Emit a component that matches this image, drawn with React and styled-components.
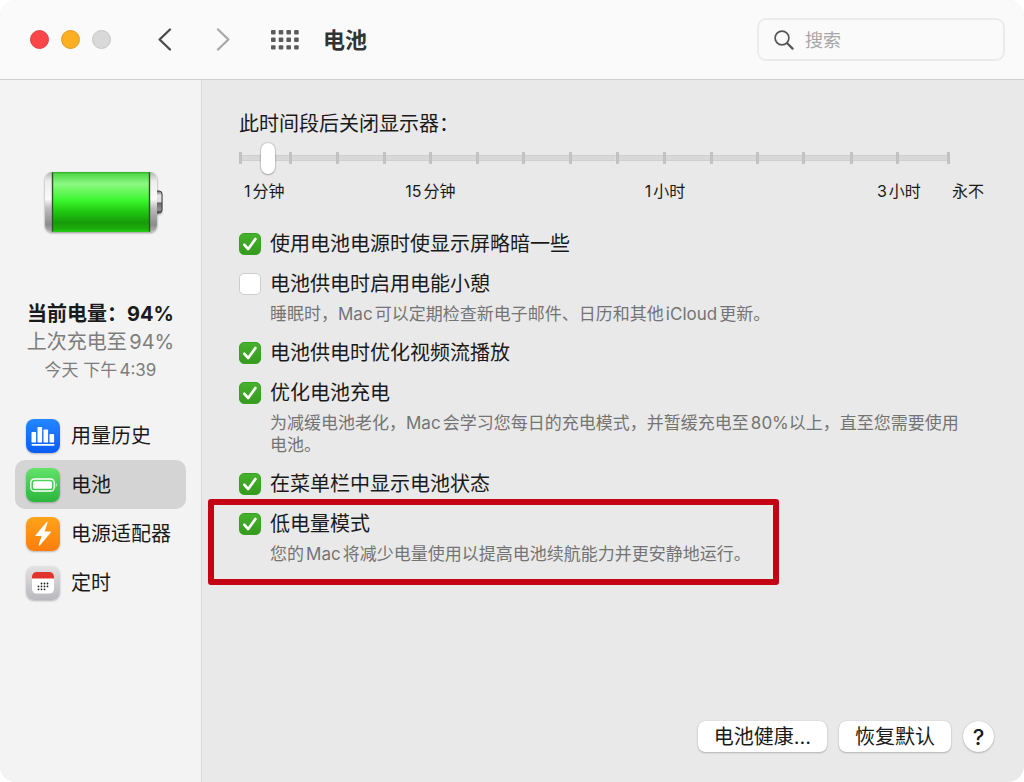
import {useState} from "react";
import styled, {createGlobalStyle} from "styled-components";

const navItems = [
  {id: 'history', label: '用量历史', Icon: HistoryIcon},
  {id: 'battery', label: '电池', Icon: BatteryIcon},
  {id: 'adapter', label: '电源适配器', Icon: AdapterIcon},
  {id: 'schedule', label: '定时', Icon: ScheduleIcon},
]

const options = [
  {id: 'dim', label: '使用电池电源时使显示屏略暗一些', checked: true},
  {
    id: 'nap',
    label: '电池供电时启用电能小憩',
    hint: '睡眠时，Mac可以定期检查新电子邮件、日历和其他iCloud更新。',
    checked: false,
  },
  {id: 'video', label: '电池供电时优化视频流播放', checked: true},
  {
    id: 'charging',
    label: '优化电池充电',
    hint: '为减缓电池老化，Mac会学习您每日的充电模式，并暂缓充电至80%以上，直至您需要使用电池。',
    checked: true,
  },
  {id: 'menubar', label: '在菜单栏中显示电池状态', checked: true},
  {
    id: 'lowpower',
    label: '低电量模式',
    hint: '您的Mac将减少电量使用以提高电池续航能力并更安静地运行。',
    checked: true,
    marked: true,
  },
]

// the first and last steps are a little longer than the rest
const steps = [50, 47, 47, 46, 47, 46, 47, 46, 47, 47, 46, 46, 48, 46, 51]

const App = () => {
  const [activeItem, setActiveItem] = useState('battery')

  return (
    <>
      <GlobalStyle />
      <Window>
        <Toolbar>
          <Lights>
            <Light $color="#fc4548" $edge="#e33e41" aria-label="关闭" />
            <Light $color="#fdaf24" $edge="#e39c1c" aria-label="最小化" />
            <Light $color="#d9d9d9" $edge="#c6c6c6" aria-label="缩放" />
          </Lights>
          <ArrowGroup>
            <IconButton aria-label="后退">
              <svg width="14" height="24" viewBox="0 0 14 24" fill="none" stroke="#4a4a4a" strokeWidth="2.3" strokeLinecap="round" strokeLinejoin="round">
                <path d="M12 1.5 L1.6 11.5 L12 21.5" />
              </svg>
            </IconButton>
            <IconButton aria-label="前进">
              <svg width="14" height="24" viewBox="0 0 14 24" fill="none" stroke="#a9a9a9" strokeWidth="2.3" strokeLinecap="round" strokeLinejoin="round">
                <path d="M2 1.5 L12.4 11.5 L2 21.5" />
              </svg>
            </IconButton>
          </ArrowGroup>
          <IconButton aria-label="显示全部">
            <svg width="28" height="20" viewBox="0 0 28 20" fill="#5b5b5b">
              {[0, 7.6, 15.2].map((y) => [0, 7.7, 15.4, 23.1].map((x) => (
                <rect key={`${x}-${y}`} x={x} y={y} width="4.6" height="4.4" rx="1" />
              )))}
            </svg>
          </IconButton>
          <Title>电池</Title>
          <Search>
            <svg width="20" height="20" viewBox="0 0 20 20" fill="none" stroke="#565656" strokeLinecap="round">
              <circle cx="8" cy="8" r="6.9" strokeWidth="1.7" />
              <path d="M13.2 13.2 L18.6 18.6" strokeWidth="2.2" />
            </svg>
            <SearchInput type="search" placeholder="搜索" aria-label="搜索" />
          </Search>
        </Toolbar>
        <Body>
          <Sidebar>
            <BatteryPicture />
            <Status>
              <Charge>当前电量：94%</Charge>
              <LastCharge>上次充电至94%</LastCharge>
              <ChargeTime>今天 下午4:39</ChargeTime>
            </Status>
            <Nav>
              {navItems.map(({id, label, Icon}) => (
                <NavButton
                  key={id}
                  $active={activeItem === id}
                  onClick={() => setActiveItem(id)}
                >
                  <Icon />
                  {label}
                </NavButton>
              ))}
            </Nav>
          </Sidebar>
          <Main>
            <SliderTitle htmlFor="display-off">此时间段后关闭显示器：</SliderTitle>
            <SliderArea>
              <Track>
                {steps.map((size, i) => <Step key={i} $size={size} />)}
              </Track>
              <Range id="display-off" type="range" min="0" max="1000" defaultValue="32" />
            </SliderArea>
            <SliderLabels>
              <span>1分钟</span>
              <span>15分钟</span>
              <span>1小时</span>
              <span>3小时</span>
              <span>永不</span>
            </SliderLabels>
            <Options>
              {options.map((option) => (
                <Option key={option.id} $marked={option.marked}>
                  <Checkbox id={option.id} type="checkbox" defaultChecked={option.checked} />
                  <label htmlFor={option.id}>{option.label}</label>
                  {option.hint && <Hint>{option.hint}</Hint>}
                </Option>
              ))}
            </Options>
            <Footer>
              <Button>电池健康...</Button>
              <Button>恢复默认</Button>
              <HelpButton aria-label="帮助">?</HelpButton>
            </Footer>
          </Main>
        </Body>
      </Window>
    </>
  );
};

function BatteryPicture() {
  return (
    <BatterySvg width="124" height="72" viewBox="-3 -1 124 72" aria-hidden="true">
      <defs>
        <linearGradient id="metal" x1="0" y1="0" x2="0" y2="1">
          <stop offset="0" stopColor="#b5b5b5" />
          <stop offset="0.15" stopColor="#ededed" />
          <stop offset="0.45" stopColor="#fafafa" />
          <stop offset="0.6" stopColor="#bdbdbd" />
          <stop offset="0.88" stopColor="#8c8c8c" />
          <stop offset="1" stopColor="#b4b4b4" />
        </linearGradient>
        <linearGradient id="charge" x1="0" y1="0" x2="0" y2="1">
          <stop offset="0" stopColor="#2fae27" />
          <stop offset="0.04" stopColor="#55da4c" />
          <stop offset="0.2" stopColor="#8cf982" />
          <stop offset="0.48" stopColor="#3af52c" />
          <stop offset="0.66" stopColor="#20c812" />
          <stop offset="0.84" stopColor="#169b08" />
          <stop offset="0.95" stopColor="#1cae0c" />
          <stop offset="1" stopColor="#25d114" />
        </linearGradient>
        <linearGradient id="tip" x1="0" y1="0" x2="0" y2="1">
          <stop offset="0" stopColor="#6b6b6b" />
          <stop offset="0.2" stopColor="#e6e6e6" />
          <stop offset="0.48" stopColor="#dddddd" />
          <stop offset="0.55" stopColor="#686868" />
          <stop offset="0.85" stopColor="#909090" />
          <stop offset="1" stopColor="#3f3f3f" />
        </linearGradient>
        <filter id="soft" x="-10%" y="-10%" width="120%" height="130%">
          <feDropShadow dx="0" dy="1" stdDeviation="1.2" floodOpacity="0.4" />
        </filter>
      </defs>
      <g filter="url(#soft)">
        <rect x="112" y="23" width="8" height="22" rx="3" fill="url(#tip)" stroke="#444" strokeWidth="1" />
        <rect x="3" y="4" width="112" height="60" rx="7" fill="url(#metal)" />
      </g>
      <rect x="10" y="4" width="98" height="60" fill="url(#charge)" />
      <path d="M10.5 4.5 V63.5 M107.5 4.5 V63.5" stroke="#2b5527" strokeWidth="1.4" />
    </BatterySvg>
  )
}

function HistoryIcon() {
  return (
    <Tile $from="#2386ff" $to="#0b5cf5">
      <svg width="34" height="34" viewBox="0 0 34 34" fill="#fff" aria-hidden="true">
        <rect x="5.5" y="13" width="4.6" height="10.6" rx="0.7" />
        <rect x="11.5" y="8" width="4.6" height="15.6" rx="0.7" />
        <rect x="17.5" y="10.5" width="4.6" height="13.1" rx="0.7" />
        <rect x="23.5" y="15" width="4.6" height="8.6" rx="0.7" />
        <rect x="5.5" y="25" width="23" height="1.7" rx="0.8" />
      </svg>
    </Tile>
  )
}

function BatteryIcon() {
  return (
    <Tile $from="#62e36a" $to="#2cb53d">
      <svg width="34" height="34" viewBox="0 0 34 34" fill="#fff" aria-hidden="true">
        <rect x="4.8" y="11" width="23.4" height="12" rx="3.6" fill="none" stroke="#fff" strokeWidth="1.3" />
        <rect x="7" y="13.2" width="19" height="7.6" rx="1.6" />
        <path d="M29.8 14.6 Q31.6 17 29.8 19.4 Z" />
      </svg>
    </Tile>
  )
}

function AdapterIcon() {
  return (
    <Tile $from="#ffa31a" $to="#fb7d0c">
      <svg width="34" height="34" viewBox="0 0 34 34" fill="#fff" aria-hidden="true">
        <path d="M20.6 5 L9.4 18.2 Q9 19 9.8 19 H15.6 L12.6 28 Q12.8 29.4 13.8 28.4 L24.8 15.4 Q25.2 14.4 24.4 14.4 H18.6 L21.6 5.6 Q21.6 4.4 20.6 5 Z" />
      </svg>
    </Tile>
  )
}

function ScheduleIcon() {
  const dots = [[15.5, 17.5], [18.5, 17.5], [21.5, 17.5], [12.5, 20.4], [15.5, 20.4], [18.5, 20.4], [21.5, 20.4], [12.5, 23.3], [15.5, 23.3], [18.5, 23.3]]
  return (
    <Tile $from="#e2e2e4" $to="#b9b9bd">
      <svg width="34" height="34" viewBox="0 0 34 34" aria-hidden="true">
        <rect x="6" y="6" width="22" height="21.5" rx="4.5" fill="#fff" />
        <path d="M6 12.6 V10.5 A4.5 4.5 0 0 1 10.5 6 H23.5 A4.5 4.5 0 0 1 28 10.5 V12.6 Z" fill="#e0342c" />
        {dots.map(([x, y]) => <circle key={`${x}-${y}`} cx={x} cy={y} r="0.9" fill="#222" />)}
      </svg>
    </Tile>
  )
}

const GlobalStyle = createGlobalStyle`
  * {
    box-sizing: border-box;
  }

  body {
    margin: 0;
    background: white;
    color: #1a1a1a;
    font-family: Inter, "Noto Sans CJK SC", sans-serif;
    font-size: 20px;
    line-height: 28px;
    text-autospace: normal;
  }

  button, input {
    font: inherit;
    color: inherit;
  }
`

const Window = styled.div`
  display: flex;
  flex-direction: column;
  min-height: 100vh;
  border-radius: 16px;
  overflow: hidden;
  background: #e9e9e9;
`

const Toolbar = styled.header`
  display: flex;
  align-items: center;
  height: 80px;
  padding: 0 19px 0 30px;
  background: #fafafa;
  border-bottom: 1px solid #cfcfcf;
`

const Lights = styled.div`
  display: flex;
  gap: 12px;
`

const Light = styled.button`
  width: 19px;
  height: 19px;
  padding: 0;
  border: 1px solid ${({$edge}) => $edge};
  border-radius: 50%;
  background: ${({$color}) => $color};
`

const IconButton = styled.button`
  display: flex;
  padding: 0;
  border: none;
  background: none;
`

const ArrowGroup = styled.div`
  display: flex;
  gap: 44px;
  margin: 0 41px 0 47px;
`

const Title = styled.h1`
  margin: 0 0 0 24px;
  font-size: 22px;
  font-weight: 700;
  color: #333;
`

const Search = styled.div`
  display: flex;
  align-items: center;
  gap: 11px;
  width: 248px;
  height: 43px;
  margin-left: auto;
  padding: 0 15px;
  border: 2px solid #ebebeb;
  border-radius: 9px;
`

const SearchInput = styled.input`
  flex: 1;
  min-width: 0;
  padding: 2px 0 0;
  border: none;
  outline: none;
  background: none;
  font-size: 18px;

  &::placeholder {
    color: #a6a6a6;
  }
`

const Body = styled.div`
  flex: 1;
  display: flex;
`

const Sidebar = styled.aside`
  flex: none;
  width: 202px;
  padding: 87px 15px 0;
  background: #f3f3f3;
  border-right: 1px solid #dadada;
`

const BatterySvg = styled.svg`
  display: block;
  margin: 0 auto;
`

const Status = styled.div`
  margin-top: 61px;
  text-align: center;
  white-space: nowrap;
`

const Charge = styled.div`
  font-weight: 700;
`

const LastCharge = styled.div`
  color: #7d7d7d;
`

const ChargeTime = styled.div`
  font-size: 17px;
  color: #7d7d7d;
`

const Nav = styled.nav`
  display: flex;
  flex-direction: column;
  margin-top: 27px;
`

const NavButton = styled.button`
  display: flex;
  align-items: center;
  gap: 11px;
  height: 49px;
  padding: 0 11px;
  border: none;
  border-radius: 10px;
  background: ${({$active}) => $active ? '#d4d4d4' : 'none'};
  white-space: nowrap;
`

const Tile = styled.span`
  display: flex;
  flex: none;
  border-radius: 8px;
  background: linear-gradient(${({$from}) => $from}, ${({$to}) => $to});
  box-shadow: 0 1px 2px rgba(0, 0, 0, 0.25);
`

const Main = styled.main`
  flex: 1;
  display: flex;
  flex-direction: column;
  min-width: 0;
  padding: 30px 30px 30px 37px;
`

const SliderTitle = styled.label`
  align-self: flex-start;
`

const SliderArea = styled.div`
  display: grid;
  align-items: center;
  height: 32px;
  margin: 4px 44px 0 0;
`

const Track = styled.div`
  grid-area: 1 / 1;
  display: flex;
  align-items: center;
  height: 12px;
  border-right: 3px solid #c2c2c2;
`

const Step = styled.div`
  flex: ${({$size}) => $size} 1 0;
  height: 12px;
  border-left: 3px solid #c2c2c2;
  background: linear-gradient(#cecece, #cecece 1px, #d8d8d8 1px, #d8d8d8 5px, #cecece 5px) center / 100% 6px no-repeat;
`

const Range = styled.input`
  grid-area: 1 / 1;
  width: 100%;
  height: 32px;
  margin: 0;
  appearance: none;
  background: none;

  &::-webkit-slider-thumb {
    appearance: none;
    width: 14px;
    height: 31px;
    border-radius: 7px;
    background: white;
    box-shadow: 0 0 1px 1px rgba(0, 0, 0, 0.12), 0 1px 2px rgba(0, 0, 0, 0.2);
  }
`

const SliderLabels = styled.div`
  display: grid;
  grid-template-columns: 161fr 239fr 232fr 75px 34px;
  margin: 3px 8px 0 5px;
  font-size: 16px;
  white-space: nowrap;
`

const Options = styled.div`
  display: flex;
  flex-direction: column;
  align-items: flex-start;
  gap: 12px;
  margin: 25px 20px 0 0;
`

const Option = styled.div`
  position: relative;
  display: grid;
  grid-template-columns: 22px 1fr;
  column-gap: 9px;
  align-items: center;

  &::after {
    content: ${({$marked}) => $marked ? '""' : 'none'};
    position: absolute;
    inset: -11px -28px -18px -31px;
    border: 6px solid #c40313;
    border-radius: 3px;
    pointer-events: none;
  }
`

const Checkbox = styled.input`
  width: 22px;
  height: 22px;
  margin: 0;
  appearance: none;
  border: 1px solid #cdcdcd;
  border-radius: 5px;
  background: white;

  &:checked {
    border-color: #38a022;
    background: url("data:image/svg+xml,%3Csvg xmlns='http://www.w3.org/2000/svg' viewBox='0 0 20 20'%3E%3Cpath d='M4.4 10.8 L8.2 15 L15.4 5' fill='none' stroke='white' stroke-width='2.7' stroke-linecap='round' stroke-linejoin='round'/%3E%3C/svg%3E"), linear-gradient(#46b22c, #359a1f);
  }
`

const Hint = styled.p`
  grid-column: 2;
  margin: 5px 0 2px;
  font-size: 17px;
  line-height: 22px;
  color: #747474;
`

const Footer = styled.footer`
  display: flex;
  justify-content: flex-end;
  gap: 12px;
  margin-top: auto;
`

const Button = styled.button`
  height: 31px;
  padding: 0 16px;
  border: none;
  border-radius: 7px;
  background: white;
  box-shadow: 0 0 1px rgba(0, 0, 0, 0.25), 0 1px 2px rgba(0, 0, 0, 0.22);
`

const HelpButton = styled(Button)`
  width: 31px;
  padding: 0;
  border-radius: 50%;
  font-size: 22px;
  font-weight: 500;
`

export default App;
